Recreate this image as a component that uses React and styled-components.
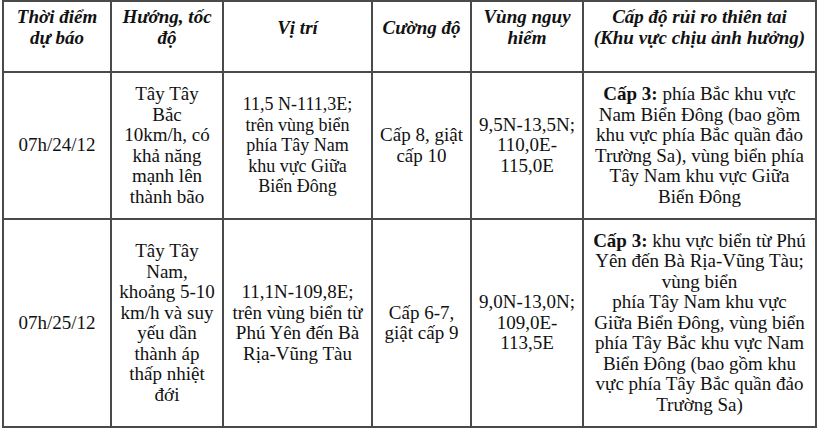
import React from 'react'
import styled, { createGlobalStyle } from 'styled-components'

const GlobalStyle = createGlobalStyle`
    html, body{
        margin: 0;
        padding: 0;
        background: #ffffff;
    }
    body{
        font-family: "Liberation Serif", "Times New Roman", serif;
        color: #111;
    }
`

const Page = styled.div`
    width: 820px;
    height: 431px;
    padding: 0 0 0 2px;
    box-sizing: border-box;
`

const Table = styled.table`
    border-collapse: collapse;
    table-layout: fixed;
    width: 813px;
    td, th{
        border: 2px solid #4a4a4a;
        padding: 0 3px;
        text-align: center;
        overflow: hidden;
    }
`

const HeadRow = styled.tr`
    height: 71px;
`

const BodyRow = styled.tr`
    height: ${p => p.$h}px;
`

const HeadCell = styled.th`
    vertical-align: top;
    font-weight: bold;
    font-style: italic;
    font-size: 19px;
    line-height: 21px;
    padding-top: 4px !important;
    .box{
        height: 42px;
        display: flex;
        flex-direction: column;
        justify-content: center;
    }
`

const Cell = styled.td`
    vertical-align: middle;
    font-size: ${p => p.$size || 19}px;
    line-height: 20.5px;
    b{
        font-weight: bold;
    }
`

const Line = styled.div`
    white-space: nowrap;
`

const cols = [108, 112, 149, 99, 112, 233]

const head = [
    ['Thời điểm', 'dự báo'],
    ['Hướng, tốc', 'độ'],
    ['Vị trí'],
    ['Cường độ'],
    ['Vùng nguy', 'hiểm'],
    ['Cấp độ rủi ro thiên tai', '(Khu vực chịu ảnh hưởng)'],
]

const rows = [
    {
        h: 147,
        cells: [
            { lines: ['07h/24/12'] },
            { lines: ['Tây Tây', 'Bắc', '10km/h, có', 'khả năng', 'mạnh lên', 'thành bão'] },
            { size: 18, lines: ['11,5 N-111,3E;', 'trên vùng biển', 'phía Tây Nam', 'khu vực Giữa', 'Biển Đông'] },
            { lines: ['Cấp 8, giật', 'cấp 10'] },
            { lines: ['9,5N-13,5N;', '110,0E-', '115,0E'] },
            {
                lines: [
                    <><b>Cấp 3:</b> phía Bắc khu vực</>,
                    'Nam Biển Đông (bao gồm',
                    'khu vực phía Bắc quần đảo',
                    'Trường Sa), vùng biển phía',
                    'Tây Nam khu vực Giữa',
                    'Biển Đông',
                ],
            },
        ],
    },
    {
        h: 208,
        cells: [
            { lines: ['07h/25/12'] },
            { lines: ['Tây Tây', 'Nam,', 'khoảng 5-10', 'km/h và suy', 'yếu dần', 'thành áp', 'thấp nhiệt', 'đới'] },
            { lines: ['11,1N-109,8E;', 'trên vùng biển từ', 'Phú Yên đến Bà', 'Rịa-Vũng Tàu'] },
            { lines: ['Cấp 6-7,', 'giật cấp 9'] },
            { lines: ['9,0N-13,0N;', '109,0E-', '113,5E'] },
            {
                lines: [
                    <><b>Cấp 3:</b> khu vực biển từ Phú</>,
                    'Yên đến Bà Rịa-Vũng Tàu;',
                    'vùng biển',
                    'phía Tây Nam khu vực',
                    'Giữa Biển Đông, vùng biển',
                    'phía Tây Bắc khu vực Nam',
                    'Biển Đông (bao gồm khu',
                    'vực phía Tây Bắc quần đảo',
                    'Trường Sa)',
                ],
            },
        ],
    },
]

export default function App() {
    return (
        <Page>
            <GlobalStyle />
            <Table>
                <colgroup>
                    {cols.map((w, i) => <col key={i} style={{ width: w }} />)}
                </colgroup>
                <thead>
                    <HeadRow>
                        {head.map((lines, i) => (
                            <HeadCell key={i}>
                                <div className="box">
                                    {lines.map((l, j) => <Line key={j}>{l}</Line>)}
                                </div>
                            </HeadCell>
                        ))}
                    </HeadRow>
                </thead>
                <tbody>
                    {rows.map((r, i) => (
                        <BodyRow key={i} $h={r.h}>
                            {r.cells.map((c, j) => (
                                <Cell key={j} $size={c.size}>
                                    {c.lines.map((l, k) => <Line key={k}>{l}</Line>)}
                                </Cell>
                            ))}
                        </BodyRow>
                    ))}
                </tbody>
            </Table>
        </Page>
    )
}
